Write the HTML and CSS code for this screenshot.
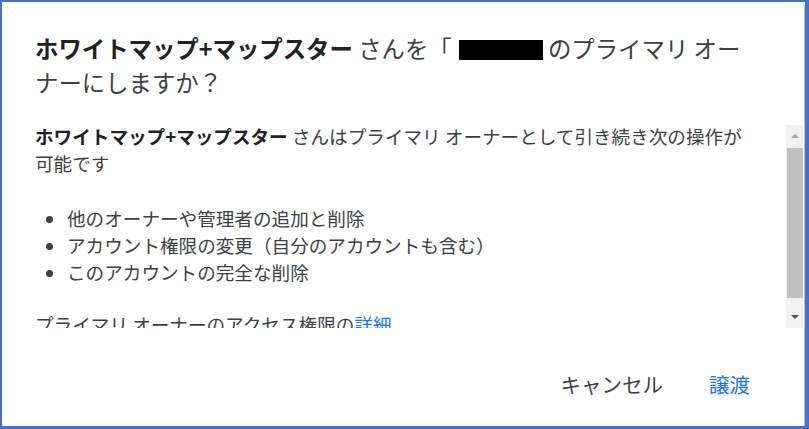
FILE: index.html
```html
<!DOCTYPE html>
<html lang="ja">
<head>
<meta charset="utf-8">
<link rel="stylesheet" href="styles.css">
</head>
<body>
<div class="frame">
  <div class="dialog">
    <h1 class="title"><b>ホワイトマップ+マップスター</b> さんを「<span class="redact"></span> のプライマリ オー<br>ナーにしますか？</h1>
    <div class="content">
      <div class="scroll">
        <p class="para"><b>ホワイトマップ+マップスター</b> さんはプライマリ オーナーとして引き続き次の操作が<br>可能です</p>
        <ul class="list">
          <li>他のオーナーや管理者の追加と削除</li>
          <li>アカウント権限の変更（自分のアカウントも含む）</li>
          <li>このアカウントの完全な削除</li>
        </ul>
        <p class="para">プライマリ オーナーのアクセス権限の<a class="link" href="#">詳細</a></p>
      </div>
      <div class="scrollbar">
        <div class="sb-btn"><span class="arrow-up"></span></div>
        <div class="sb-track"><div class="sb-thumb"></div></div>
        <div class="sb-btn"><span class="arrow-down"></span></div>
      </div>
    </div>
    <div class="actions">
      <button class="btn btn-cancel">キャンセル</button>
      <button class="btn btn-ok">譲渡</button>
    </div>
  </div>
</div>
</body>
</html>
```
FILE: styles.css
```css
html, body {
  margin: 0;
  padding: 0;
  background: #ffffff;
}
body {
  font-family: "Noto Sans CJK JP", "Noto Sans", sans-serif;
}
.frame {
  width: 809px;
  height: 429px;
  box-sizing: border-box;
  border: 2px solid #4472c4;
  border-right-width: 4px;
  border-bottom-width: 3px;
  background: #ffffff;
}
.dialog {
  height: 100%;
  box-sizing: border-box;
  border-right: 1px solid #c6c6c6;
  border-top-right-radius: 5px;
  display: flex;
  flex-direction: column;
}
.title {
  margin: 29px 0 0 33px;
  font-size: 23.4px;
  line-height: 34px;
  font-weight: 400;
  color: #3c4043;
  white-space: nowrap;
}
.title b {
  font-weight: 700;
  color: #202124;
}
.redact {
  display: inline-block;
  width: 84px;
  height: 20px;
  margin-left: 7px;
  background: #000;
  vertical-align: -2px;
}
.content {
  margin-top: 23px;
  height: 206px;
  display: flex;
}
.scroll {
  flex: 1;
  overflow: hidden;
  padding-left: 33px;
  font-size: 18.6px;
  line-height: 27px;
  color: #3c4043;
  white-space: nowrap;
}
.para {
  margin: 0;
}
.para b {
  font-weight: 700;
  color: #202124;
}
.list {
  margin: 28px 0 25px;
  padding-left: 32px;
}
.link {
  color: #1a73e8;
  text-decoration: none;
}
.scrollbar {
  width: 17px;
  margin: 3px 1px 0 0;
  background: #f1f1f1;
  display: flex;
  flex-direction: column;
}
.sb-btn {
  height: 22px;
  display: flex;
  align-items: center;
  justify-content: center;
}
.sb-track {
  flex: 1;
  padding: 1px 0 8px;
  display: flex;
}
.sb-thumb {
  flex: 1;
  margin: 0 0.5px;
  background: #c1c1c1;
}
.arrow-up {
  width: 0;
  height: 0;
  border-left: 4px solid transparent;
  border-right: 4px solid transparent;
  border-bottom: 4px solid #a3a3a3;
}
.arrow-down {
  width: 0;
  height: 0;
  border-left: 4px solid transparent;
  border-right: 4px solid transparent;
  border-top: 4px solid #505050;
}
.actions {
  display: flex;
  justify-content: flex-end;
  margin-top: 38px;
  padding-right: 42px;
  gap: 22px;
}
.btn {
  font-family: inherit;
  font-size: 20.5px;
  line-height: 36px;
  border: none;
  background: none;
  padding: 0 12px;
  cursor: pointer;
}
.btn-cancel {
  color: #3c4043;
}
.btn-ok {
  color: #1a73e8;
}
```
